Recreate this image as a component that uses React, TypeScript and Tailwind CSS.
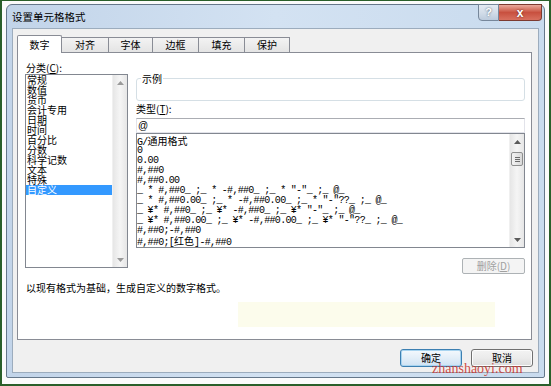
import React from "react";

const cats = ["常规", "数值", "货币", "会计专用", "日期", "时间", "百分比", "分数", "科学记数", "文本", "特殊", "自定义"];

const cjk = (s: string) => <span className="text-[10px] tracking-normal font-['Noto_Sans_CJK_SC',sans-serif]">{s}</span>;

const types: React.ReactNode[] = [
  <>G/{cjk("通用格式")}</>,
  "0",
  "0.00",
  "#,##0",
  "#,##0.00",
  '_ * #,##0_ ;_ * -#,##0_ ;_ * "-"_ ;_ @_',
  '_ * #,##0.00_ ;_ * -#,##0.00_ ;_ * "-"??_ ;_ @_',
  '_ ¥* #,##0_ ;_ ¥* -#,##0_ ;_ ¥* "-"_ ;_ @_',
  '_ ¥* #,##0.00_ ;_ ¥* -#,##0.00_ ;_ ¥* "-"??_ ;_ @_',
  "#,##0;-#,##0",
  <>#,##0;[{cjk("红色")}]-#,##0</>,
];

function Arrow({ up, color }: { up?: boolean; color: string }) {
  return (
    <div className="h-[15px] flex items-center justify-center">
      <svg width="7" height="4" viewBox="0 0 7 4">
        {up ? <path d="M3.5 0 L7 4 L0 4 Z" fill={color} /> : <path d="M0 0 L7 0 L3.5 4 Z" fill={color} />}
      </svg>
    </div>
  );
}

function Scrollbar({ thumb, color }: { thumb?: boolean; color: string }) {
  return (
    <div className="w-[15px] h-full flex flex-col bg-gradient-to-r from-[#e6e6e6] via-[#f5f5f5] to-[#e6e6e6] border-l border-[#f0f0f0]">
      <Arrow up color={color} />
      {thumb && (
        <div className="mt-[3px] mx-[1px] h-[14px] rounded-[2px] border border-[#8e8f8f] bg-gradient-to-r from-[#f3f3f3] to-[#d9d9d9] flex flex-col items-center justify-center gap-[1px]">
          <div className="w-[5px] h-[1px] bg-[#6a6a6a]" />
          <div className="w-[5px] h-[1px] bg-[#6a6a6a]" />
          <div className="w-[5px] h-[1px] bg-[#6a6a6a]" />
        </div>
      )}
      <div className="flex-1" />
      <Arrow color={color} />
    </div>
  );
}

const tabs = [
  { t: "数字", w: "w-[45px]" },
  { t: "对齐", w: "w-[47px]" },
  { t: "字体", w: "w-[44px]" },
  { t: "边框", w: "w-[46px]" },
  { t: "填充", w: "w-[46px]" },
  { t: "保护", w: "w-[45px]" },
];

export default function App() {
  return (
    <div className="relative w-[551px] h-[386px] box-border border-l-2 border-r-2 border-t border-b-2 border-[#2a5f2a] bg-[#fbfbfb] pl-[4px] pt-[3px] font-['Noto_Sans_CJK_SC',sans-serif] text-black overflow-hidden">
      <div className="w-[539px] h-[374px] box-border rounded-t-[6px] rounded-b-[2px] border border-[#65778a] bg-gradient-to-r from-[#c2d4e9] via-[#d3e2f2] to-[#c9dbee] flex flex-col px-[5px]">
        {/* title bar */}
        <div className="h-[23px] flex items-start">
          <div className="h-full flex items-center text-[10.5px] leading-none pt-[1px]">设置单元格格式</div>
          <div className="flex-1" />
          <div className="flex -mt-[1px] -mr-[3px]">
            <div className="w-[21px] h-[17px] rounded-bl-[4px] border border-[#76879b] bg-gradient-to-b from-[#e4ebf3] via-[#d3dde9] to-[#bccbdc] flex items-center justify-center text-[11px] font-bold text-white [text-shadow:0_0_2px_#3d4d60] font-['Liberation_Sans',sans-serif]">?</div>
            <div className="w-[43px] h-[17px] rounded-br-[4px] border border-l-0 border-[#7c3a30] bg-gradient-to-b from-[#e9a99c] via-[#c8503f] to-[#d8705f] flex items-center justify-center text-[12px] font-bold text-white [text-shadow:0_0_2px_#5a1a10] font-['Liberation_Sans',sans-serif] leading-none">x</div>
          </div>
        </div>
        {/* client */}
        <div className="flex-1 mb-[4px] border border-[#9cacbd] bg-[#f0f0f0] flex flex-col">
          <div className="mt-[6px] pl-[4px] h-[17px] flex items-end">
            {tabs.map((tb, i) =>
              i === 0 ? (
                <div key={tb.t} className={`${tb.w} h-[18px] -mb-[1px] relative z-10 bg-white border border-b-0 border-[#898c95] rounded-t-[2px] flex items-center justify-center text-[10px] leading-none`}>
                  {tb.t}
                </div>
              ) : (
                <div key={tb.t} className={`${tb.w} h-[15px] border-t border-r border-[#898c95] bg-gradient-to-b from-[#f3f3f3] to-[#e4e4e4] flex items-center justify-center text-[10px] leading-none`}>
                  {tb.t}
                </div>
              )
            )}
          </div>
          <div className="ml-[4px] w-[515px] h-[288px] box-border border border-[#898c95] bg-white flex flex-col">
            <div className="flex pl-[7px] gap-[8px]">
              <div className="w-[103px] flex flex-col">
                <div className="h-[21px] pt-[8px] pl-[1px] text-[10px] leading-[13px]">分类(<span className="underline">C</span>):</div>
                <div className="h-[194px] border border-[#828790] flex">
                  <div className="flex-1 flex flex-col text-[10px] leading-[10px]">
                    {cats.map((c, i) => (
                      <div key={c} className={i === cats.length - 1 ? "h-[10px] bg-[#3399ff] text-white pl-[1px]" : "h-[10px] pl-[1px]"}>
                        {c}
                      </div>
                    ))}
                  </div>
                  <Scrollbar color="#9a9a9a" />
                </div>
              </div>
              <div className="w-[389px] flex flex-col">
                <div className="mt-[25px] h-[23px] border border-[#d5dfe5] rounded-[3px] flex flex-col">
                  <div className="-mt-[6px] ml-[4px] px-[1px] w-fit bg-white text-[10px] leading-[12px]">示例</div>
                </div>
                <div className="text-[10px] leading-[16px]">类型(<span className="underline">T</span>):</div>
                <div className="mt-[1px] h-[15px] border border-[#e2e3ea] border-t-[#abadb3] text-[10px] leading-[13px] pl-[1px] font-['Liberation_Sans',sans-serif]">@</div>
                <div className="h-[115px] border border-[#828790] flex">
                  <div className="flex-1 pt-[2px] pl-[0px] flex flex-col text-[10px] leading-[10px] tracking-[-0.7px] font-['Liberation_Mono','Noto_Sans_CJK_SC',monospace] whitespace-pre overflow-hidden">
                    {types.map((t, i) => (
                      <div key={i} className="h-[10px]">
                        {t}
                      </div>
                    ))}
                  </div>
                  <Scrollbar thumb color="#5a5a5a" />
                </div>
                <div className="mt-[10px] self-end w-[63px] h-[16px] border border-[#adb2b5] rounded-[2px] bg-[#f4f4f4] flex items-center justify-center text-[10px] leading-none text-[#a0a0a0]">
                  删除(<span className="underline">D</span>)
                </div>
              </div>
            </div>
            <div className="mt-[7px] pl-[8px] text-[10px] leading-[14px]">以现有格式为基础，生成自定义的数字格式。</div>
            <div className="mt-[7px] ml-[220px] w-[257px] h-[25px] bg-[#fcfcec]" />
          </div>
          <div className="mt-[9px] flex justify-end gap-[9px] pr-[5px]">
            <div className="w-[62px] h-[18px] rounded-[3px] border border-[#3c7fb1] bg-gradient-to-b from-[#f4f9fd] via-[#e3eef8] to-[#cfe2f3] shadow-[inset_0_0_0_1px_#a8d4f0] flex items-center justify-center text-[10px] leading-none">确定</div>
            <div className="w-[62px] h-[18px] rounded-[3px] border border-[#707070] bg-gradient-to-b from-[#f3f3f3] via-[#ebebeb] to-[#dcdcdc] shadow-[inset_0_0_0_1px_#fcfcfc] flex items-center justify-center text-[10px] leading-none">取消</div>
          </div>
        </div>
      </div>
      <div className="absolute left-[430px] top-[361px] text-[14px] leading-[14px] text-[#c8322a] opacity-85 font-['Liberation_Serif',serif]">zhanshaoyi.com</div>
    </div>
  );
}
